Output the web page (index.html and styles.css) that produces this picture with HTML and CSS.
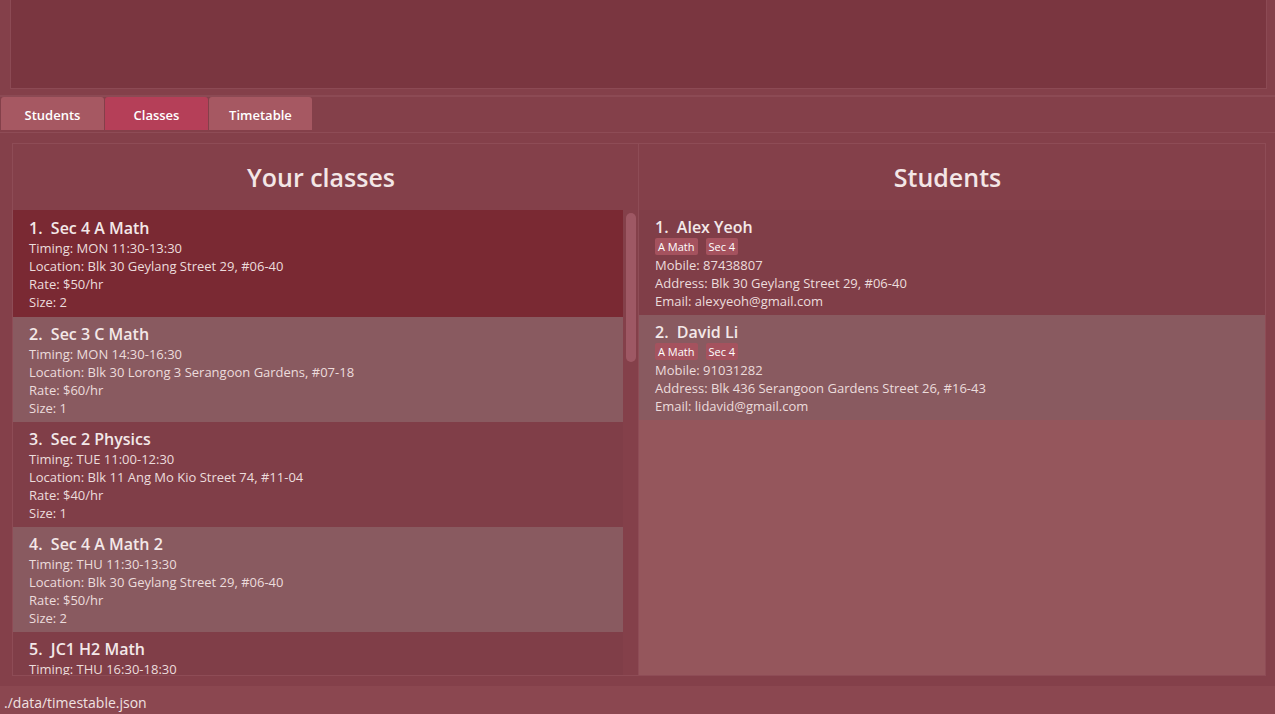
FILE: index.html
```html
<!DOCTYPE html>
<html>
<head>
<meta charset="utf-8">
<link rel="stylesheet" href="styles.css">
</head>
<body>
<div class="command-area">
  <div class="command-box"></div>
</div>
<div class="tabbar">
  <div class="tab">Students</div>
  <div class="tab active">Classes</div>
  <div class="tab">Timetable</div>
</div>
<div class="content">
  <section class="panel left">
    <h2 class="panel-title">Your classes</h2>
    <div class="list-wrap">
      <div class="list">
        <div class="item selected">
          <div class="title">1.&nbsp; Sec 4 A Math</div>
          <div class="line">Timing: MON 11:30-13:30</div>
          <div class="line">Location: Blk 30 Geylang Street 29, #06-40</div>
          <div class="line">Rate: $50/hr</div>
          <div class="line">Size: 2</div>
        </div>
        <div class="item alt">
          <div class="title">2.&nbsp; Sec 3 C Math</div>
          <div class="line">Timing: MON 14:30-16:30</div>
          <div class="line">Location: Blk 30 Lorong 3 Serangoon Gardens, #07-18</div>
          <div class="line">Rate: $60/hr</div>
          <div class="line">Size: 1</div>
        </div>
        <div class="item">
          <div class="title">3.&nbsp; Sec 2 Physics</div>
          <div class="line">Timing: TUE 11:00-12:30</div>
          <div class="line">Location: Blk 11 Ang Mo Kio Street 74, #11-04</div>
          <div class="line">Rate: $40/hr</div>
          <div class="line">Size: 1</div>
        </div>
        <div class="item alt">
          <div class="title">4.&nbsp; Sec 4 A Math 2</div>
          <div class="line">Timing: THU 11:30-13:30</div>
          <div class="line">Location: Blk 30 Geylang Street 29, #06-40</div>
          <div class="line">Rate: $50/hr</div>
          <div class="line">Size: 2</div>
        </div>
        <div class="item">
          <div class="title">5.&nbsp; JC1 H2 Math</div>
          <div class="line">Timing: THU 16:30-18:30</div>
        </div>
      </div>
      <div class="scrolltrack"><div class="thumb"></div></div>
    </div>
  </section>
  <section class="panel right">
    <h2 class="panel-title">Students</h2>
    <div class="slist">
      <div class="item sitem">
        <div class="title">1.&nbsp; Alex Yeoh</div>
        <div class="tags"><span class="tag">A Math</span><span class="tag">Sec 4</span></div>
        <div class="line">Mobile: 87438807</div>
        <div class="line">Address: Blk 30 Geylang Street 29, #06-40</div>
        <div class="line">Email: alexyeoh@gmail.com</div>
      </div>
      <div class="item sitem alt">
        <div class="title">2.&nbsp; David Li</div>
        <div class="tags"><span class="tag">A Math</span><span class="tag">Sec 4</span></div>
        <div class="line">Mobile: 91031282</div>
        <div class="line">Address: Blk 436 Serangoon Gardens Street 26, #16-43</div>
        <div class="line">Email: lidavid@gmail.com</div>
      </div>
      <div class="empty"></div>
    </div>
  </section>
</div>
<div class="status">./data/timestable.json</div>
</body>
</html>
```

FILE: styles.css
```css
* { box-sizing: border-box; }
html, body { margin: 0; padding: 0; }
body {
  width: 1275px;
  height: 714px;
  overflow: hidden;
  background: #84404a;
  font-family: "Open Sans", "Liberation Sans", sans-serif;
  color: #f0e4e4;
  display: flex;
  flex-direction: column;
}
.command-area {
  height: 95px;
  padding: 0 8px 6px 10px;
  flex: none;
}
.command-box {
  height: 89px;
  background: #7a3640;
  border: 1px solid #8c4a54;
  border-top: none;
}
.tabbar {
  flex: none;
  height: 38px;
  border-top: 2px solid #8c4a54;
  border-bottom: 1px solid #8e4c56;
  padding: 0 0 0 1px;
  display: flex;
  gap: 1px;
  align-items: flex-start;
}
.tab {
  width: 103px;
  height: 33px;
  padding-top: 2px;
  background: #a65862;
  border-radius: 3px 3px 0 0;
  font-size: 13px;
  font-weight: 600;
  color: #ffffff;
  display: flex;
  align-items: center;
  justify-content: center;
}
.tab.active { background: #b53f58; }
.content {
  flex: none;
  height: 553px;
  padding: 10px 9px 10px 12px;
  display: flex;
}
.panel {
  width: 627px;
  height: 533px;
  border: 1px solid #8e4c56;
  display: flex;
  flex-direction: column;
  overflow: hidden;
}
.panel.right { border-left: none; }
.panel-title {
  margin: 0;
  height: 66px;
  flex: none;
  font-size: 25px;
  font-weight: 600;
  color: #f3e6e6;
  display: flex;
  align-items: center;
  justify-content: center;
  padding-right: 9px;
}
.list-wrap {
  flex: 1;
  display: flex;
  overflow: hidden;
}
.list {
  width: 610px;
  flex: none;
}
.scrolltrack {
  flex: 1;
  padding: 3px 2px 0 3px;
}
.thumb {
  width: 10px;
  height: 149px;
  border-radius: 5px;
  background: #9e5864;
}
.item {
  height: 105px;
  padding: 7px 16px 5px 16px;
  background: #803e48;
}
.item.alt { background: #895a60; }
.item.selected {
  background: #7a2933;
  height: 107px;
  padding-top: 8px;
}
.title {
  font-size: 16px;
  font-weight: 600;
  line-height: 20px;
  color: #f3e8e8;
}
.line {
  font-size: 13px;
  line-height: 18px;
  color: #ecdcdc;
}
.item .title + .line { margin-top: 1px; }
.slist {
  flex: 1;
  display: flex;
  flex-direction: column;
}
.sitem { padding: 7px 16px 5px 16px; flex: none; }
.tags {
  display: flex;
  gap: 8px;
  height: 19px;
  align-items: flex-start;
  padding-top: 1px;
}
.tag {
  background: #a5525e;
  font-size: 11px;
  line-height: 17px;
  height: 17px;
  padding: 0 3px;
  border-radius: 2px;
  color: #ffffff;
}
.empty {
  flex: 1;
  background: #95565c;
}
.status {
  flex: 1;
  background: #8b4750;
  font-size: 14px;
  line-height: 20px;
  padding: 7px 0 0 4px;
  color: #f0e2e2;
  white-space: nowrap;
}
```
